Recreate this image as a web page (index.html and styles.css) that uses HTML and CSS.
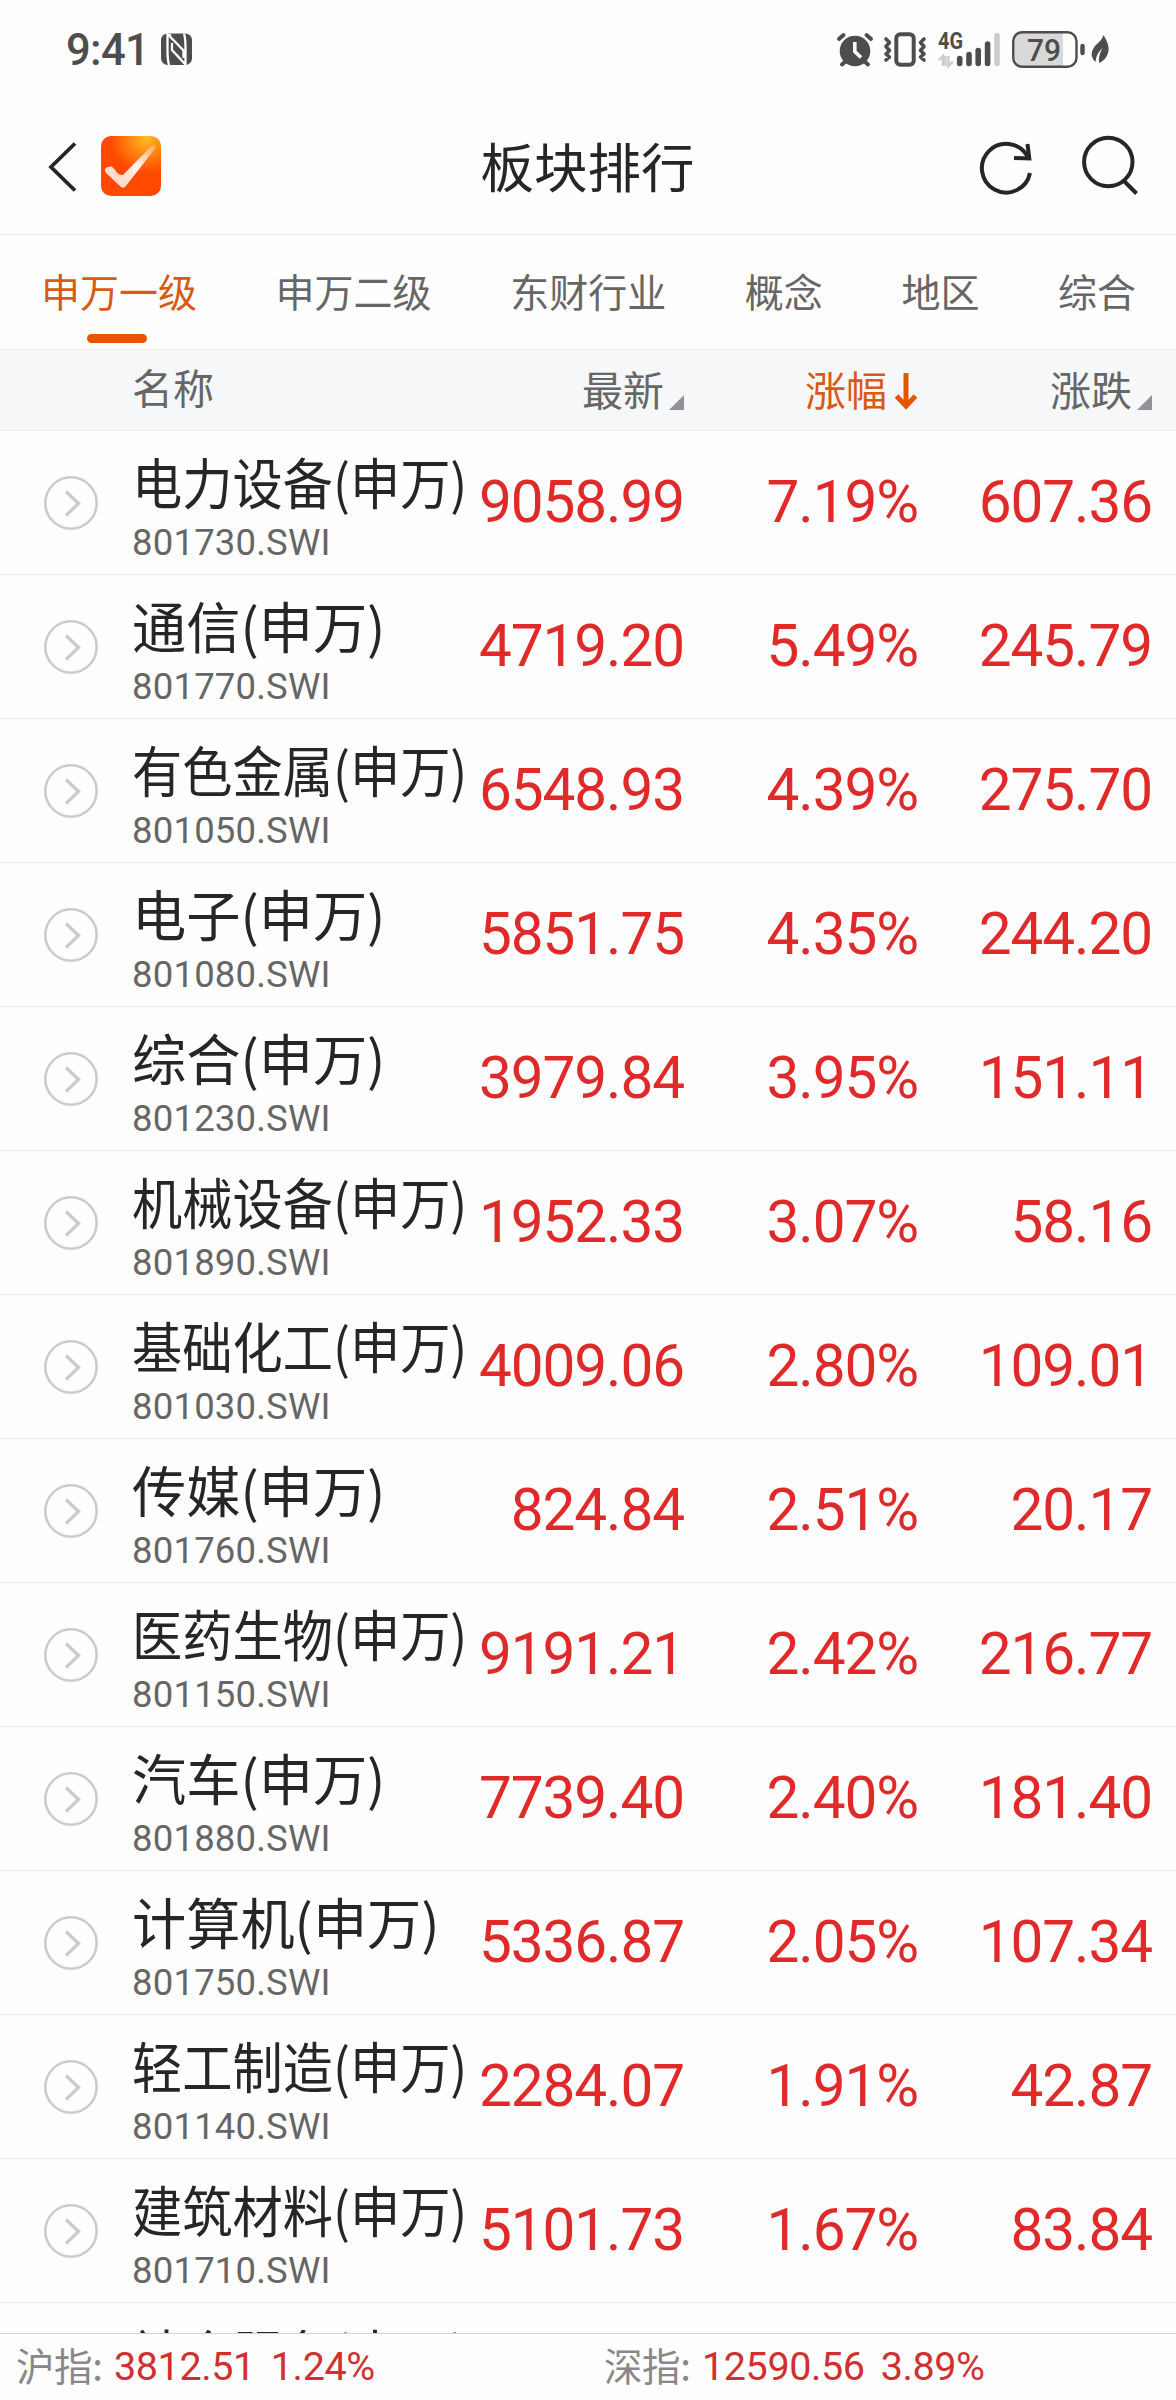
FILE: index.html
```html
<!DOCTYPE html>
<html lang="zh-CN">
<head>
    <meta charset="UTF-8">
    <meta name="viewport" content="width=device-width, initial-scale=1.0">
    <title>板块排行</title>
    <link rel="stylesheet" href="styles.css">
</head>
<body>
    <div class="phone">
        <!-- Status bar -->
        <div class="status-bar">
            <span class="time">9:41</span>
            <svg class="nfc" width="32" height="38" viewBox="161 31 32 38">
                <rect x="161" y="33.500" width="31" height="31.500" rx="6.500" fill="#4d4d4d"/>
                <path d="M169 65Q167.500 60 167.500 50V34L183.500 50.500V58M170 36V34M184 33.500Q185.500 38 185.500 48V64.500L172 50V43" fill="none" stroke="#fefefe" stroke-width="2.300"/>
            </svg>
            <div class="status-right">
                <svg width="38" height="38" viewBox="835 31 38 38">
                    <circle cx="854" cy="51" r="15.300" fill="#4d4d4d"/>
                    <path d="M838 39L842.500 35M870 39L865.500 35M845 61L841 64.500M863 61L867 64.500" stroke="#4d4d4d" stroke-width="4" stroke-linecap="round"/>
                    <path d="M853.800 42V51.500L860 57.500" fill="none" stroke="#fefefe" stroke-width="3.600"/>
                </svg>
                <svg width="44" height="38" viewBox="884 31 44 38">
                    <rect x="896.300" y="34.300" width="17.400" height="30.400" rx="4" fill="none" stroke="#4d4d4d" stroke-width="4"/>
                    <path d="M886 39L889.500 42.500L886 46.500L889.500 50.500L886 54L889.500 57L886 60M924 39L920.500 42.500L924 46.500L920.500 50.500L924 54L920.500 57L924 60" fill="none" stroke="#4d4d4d" stroke-width="3.600" stroke-linejoin="round" stroke-linecap="round"/>
                </svg>
                <svg width="64" height="38" viewBox="938 31 64 38">
                    <text class="net" x="938" y="49" textLength="25" lengthAdjust="spacingAndGlyphs">4G</text>
                    <path d="M939 60L943 56V66M945.500 56V66M948.500 56V66L953 61.500" fill="none" stroke="#ccc" stroke-width="2.400"/>
                    <path d="M959.700 58.500V63.500M969 54.500V63.500M978.200 50.500V63.500M987.600 44V63.500" stroke="#4d4d4d" stroke-width="5.600" stroke-linecap="round"/>
                    <path d="M997 35.500V63.500" stroke="#ccc" stroke-width="5.600" stroke-linecap="round"/>
                </svg>
                <svg width="74" height="38" viewBox="1012 31 74 38">
                    <path d="M1023 33H1063V66H1023Q1014 66 1014 57V42Q1014 33 1023 33Z" fill="#d9d9d9"/>
                    <rect x="1013.200" y="32.200" width="63.300" height="34.600" rx="9" fill="none" stroke="#4d4d4d" stroke-width="2.400"/>
                    <path d="M1082.500 46V53" stroke="#4d4d4d" stroke-width="4.400" stroke-linecap="round"/>
                    <text class="level" x="1027" y="61" textLength="34" lengthAdjust="spacingAndGlyphs">79</text>
                </svg>
                <svg width="19" height="38" viewBox="1091 31 19 38">
                    <path d="M1103.500 35C1107 41 1110 47 1108 53C1106 59 1103 61 1099 63Q1098 56 1102.500 48Q1096 54 1095.500 62C1090 57 1091 51 1095 46C1098 43 1102 40 1103.500 35Z" fill="#4d4d4d"/>
                </svg>
            </div>
        </div>

        <!-- Title bar -->
        <div class="title-bar">
            <div class="title-side">
                <svg class="back" width="30" height="54" viewBox="48 138 30 54">
                    <path d="M75 142.500L51 166L75 189.500" fill="none" stroke="#262626" stroke-width="3.800"/>
                </svg>
                <svg width="60" height="60" viewBox="0 0 60 60">
                    <defs>
                        <radialGradient id="logoBg" cx="45" cy="2" r="36" gradientUnits="userSpaceOnUse">
                            <stop offset="0" stop-color="#ffbd20"/>
                            <stop offset="1" stop-color="#ff4800"/>
                        </radialGradient>
                        <linearGradient id="tick" x1="52" y1="8" x2="24" y2="44" gradientUnits="userSpaceOnUse">
                            <stop offset="0" stop-color="#ffa75c"/>
                            <stop offset="0.600" stop-color="#fff4ee"/>
                            <stop offset="1" stop-color="#ffdccb"/>
                        </linearGradient>
                    </defs>
                    <rect width="60" height="60" rx="10" fill="url(#logoBg)"/>
                    <path d="M4 33Q6 30 10.500 30.500Q13 32 15 35.500Q18 39.500 22 39L51 9.500Q55 8 54.500 12L24.500 50.500Q22 53 19.500 50.500L5 37Q3.500 35 4 33Z" fill="url(#tick)"/>
                </svg>
            </div>
            <h1>板块排行</h1>
            <div class="title-side title-actions">
                <svg width="54" height="60" viewBox="979 135 54 60">
                    <path d="M1030 172A24.300 24.300 0 1 1 1028 156.500" fill="none" stroke="#262626" stroke-width="4"/>
                    <path d="M1027.500 143L1029.300 157.500L1014 157" fill="none" stroke="#262626" stroke-width="4"/>
                </svg>
                <svg width="58" height="60" viewBox="1081 135 58 60">
                    <circle cx="1108.300" cy="161" r="24.200" fill="none" stroke="#262626" stroke-width="4"/>
                    <path d="M1124 180L1136.500 192.500" stroke="#262626" stroke-width="4"/>
                </svg>
            </div>
        </div>

        <!-- Tabs -->
        <div class="tabs">
            <div class="tab active">申万一级</div>
            <div class="tab">申万二级</div>
            <div class="tab">东财行业</div>
            <div class="tab">概念</div>
            <div class="tab">地区</div>
            <div class="tab">综合</div>
        </div>

        <!-- Table header -->
        <div class="table-head">
            <span></span>
            <span class="head-name">名称</span>
            <span class="head-cell">最新<i class="corner"></i></span>
            <span class="head-cell sorted">涨幅<svg width="24" height="36" viewBox="0 0 24 36"><path d="M12 0V33M2.500 23L12 33L21.500 23" fill="none" stroke="#e65500" stroke-width="5"/></svg></span>
            <span class="head-cell">涨跌<i class="corner"></i></span>
        </div>

        <div class="table-body" id="list"></div>

        <!-- Index footer -->
        <div class="footer">
            <div class="index"><span class="index-name">沪指:</span><span class="index-value">3812.51</span><span>1.24%</span></div>
            <div class="index"><span class="index-name">深指:</span><span class="index-value">12590.56</span><span>3.89%</span></div>
        </div>
    </div>

    <script>
        const sectors = [
            ["电力设备", "801730", "9058.99", "7.19%", "607.36"],
            ["通信", "801770", "4719.20", "5.49%", "245.79"],
            ["有色金属", "801050", "6548.93", "4.39%", "275.70"],
            ["电子", "801080", "5851.75", "4.35%", "244.20"],
            ["综合", "801230", "3979.84", "3.95%", "151.11"],
            ["机械设备", "801890", "1952.33", "3.07%", "58.16"],
            ["基础化工", "801030", "4009.06", "2.80%", "109.01"],
            ["传媒", "801760", "824.84", "2.51%", "20.17"],
            ["医药生物", "801150", "9191.21", "2.42%", "216.77"],
            ["汽车", "801880", "7739.40", "2.40%", "181.40"],
            ["计算机", "801750", "5336.87", "2.05%", "107.34"],
            ["轻工制造", "801140", "2284.07", "1.91%", "42.87"],
            ["建筑材料", "801710", "5101.73", "1.67%", "83.84"],
            ["社会服务", "", "", "", ""]
        ];

        document.getElementById("list").innerHTML = sectors.map(([name, code, last, pct, diff]) => `
            <div class="row">
                <svg class="more" width="54" height="54" viewBox="0 0 54 54">
                    <circle cx="27" cy="27" r="25.700"/>
                    <path d="M22 15.500L34.500 27.500L22 39.500"/>
                </svg>
                <div class="sector">
                    <div class="sector-name ${name.length > 3 ? "condensed" : ""}">${name}(申万)</div>
                    <div class="sector-code">${code ? code + ".SWI" : ""}</div>
                </div>
                <div class="num">${last}</div>
                <div class="num">${pct}</div>
                <div class="num">${diff}</div>
            </div>`).join("");
    </script>
</body>
</html>
```
FILE: styles.css
```css
* {
    box-sizing: border-box;
}

body {
    margin: 0;
    background: #fefefe;
    color: #262626;
    font-family: "Noto Sans CJK SC", sans-serif;
}

.phone {
    width: 1176px;
    height: 2400px;
    display: flex;
    flex-direction: column;
    overflow: hidden;
}

svg {
    overflow: visible;
}

/* Status bar */
.status-bar {
    height: 100px;
    display: flex;
    align-items: center;
    padding: 0 66px;
}

.time {
    width: 95px;
    padding-top: 2px;
    font: 500 43.5px/50px Roboto, sans-serif;
    letter-spacing: -0.6px;
    color: #4d4d4d;
}

.status-right {
    display: flex;
    gap: 10px;
    margin-left: auto;
}

.status-right svg:last-child {
    margin-left: -5px;
}

.net {
    font: 700 23px Roboto, sans-serif;
    fill: #4d4d4d;
}

.level {
    font: 500 32px Roboto, sans-serif;
    fill: #4d4d4d;
}

/* Title bar */
.title-bar {
    height: 135px;
    display: flex;
    align-items: center;
    justify-content: space-between;
    padding: 0 37px 2px 48px;
    border-bottom: 1px solid #ededed;
}

.title-side {
    width: 160px;
    display: flex;
    align-items: center;
    gap: 23px;
}

.title-actions {
    justify-content: flex-end;
    gap: 48px;
}

h1 {
    margin: 0;
    padding: 0 12px 3px 0;
    font-size: 53.5px;
    font-weight: 400;
    line-height: 60px;
}

/* Tabs */
.tabs {
    height: 115px;
    display: flex;
    gap: 78.6px;
    padding-left: 41px;
    border-bottom: 1px solid #ededed;
    font-size: 39px;
    line-height: 110px;
    color: #666;
}

.tab {
    flex: none;
}

.active {
    position: relative;
    color: #d85a14;
}

.active::after {
    content: "";
    position: absolute;
    left: 46px;
    bottom: 6px;
    width: 60px;
    height: 9px;
    border-radius: 5px;
    background: #e65500;
}

/* Table */
.table-head,
.row {
    display: grid;
    grid-template-columns: 132px 318px 234px 234px 234px;
    align-items: center;
}

.table-head {
    height: 81px;
    padding-bottom: 4px;
    background: #f6f7f9;
    border-bottom: 1px solid #eff0f2;
    font-size: 41px;
    line-height: 60px;
    color: #666;
}

.head-name {
    padding-bottom: 4px;
}

.head-cell {
    display: flex;
    align-items: center;
    justify-content: flex-end;
    gap: 5px;
}

.corner {
    align-self: flex-end;
    width: 15px;
    height: 15px;
    margin-bottom: 8px;
    background: #929296;
    clip-path: polygon(100% 0, 100% 100%, 0 100%);
}

.sorted {
    gap: 7px;
    color: #d85a14;
}

.sorted svg {
    margin-top: 5px;
}

.table-body {
    height: 1902px;
    overflow: hidden;
}

.row {
    height: 144px;
    border-bottom: 1px solid #ebebeb;
}

.more {
    margin-left: 44px;
    fill: none;
    stroke: #ccc;
    stroke-width: 2.6;
}

.more path {
    stroke-width: 3.4;
}

.sector {
    align-self: start;
    white-space: nowrap;
}

.sector-name {
    height: 85px;
    font-size: 54.2px;
    line-height: 99px;
}

.condensed {
    transform: scaleX(0.927);
    transform-origin: left;
}

.sector-code {
    font: 36.5px/54px Roboto, sans-serif;
    letter-spacing: 0.2px;
    color: #666;
}

.num {
    padding-bottom: 2px;
    font: 58.5px/72px Roboto, sans-serif;
    letter-spacing: -1.1px;
    text-align: right;
    color: #e02a2a;
}

/* Footer */
.footer {
    flex: 1;
    display: flex;
    border-top: 1px solid #d2d2d2;
    font: 39.5px/66px Roboto, sans-serif;
    letter-spacing: -0.4px;
    color: #d03030;
}

.index {
    width: 588px;
    display: flex;
    padding-left: 16px;
}

.index-name {
    width: 98px;
    font-family: "Noto Sans CJK SC", sans-serif;
    font-size: 38.5px;
    line-height: 60px;
    color: #888;
}

.index-value {
    margin-right: 16px;
}
```
